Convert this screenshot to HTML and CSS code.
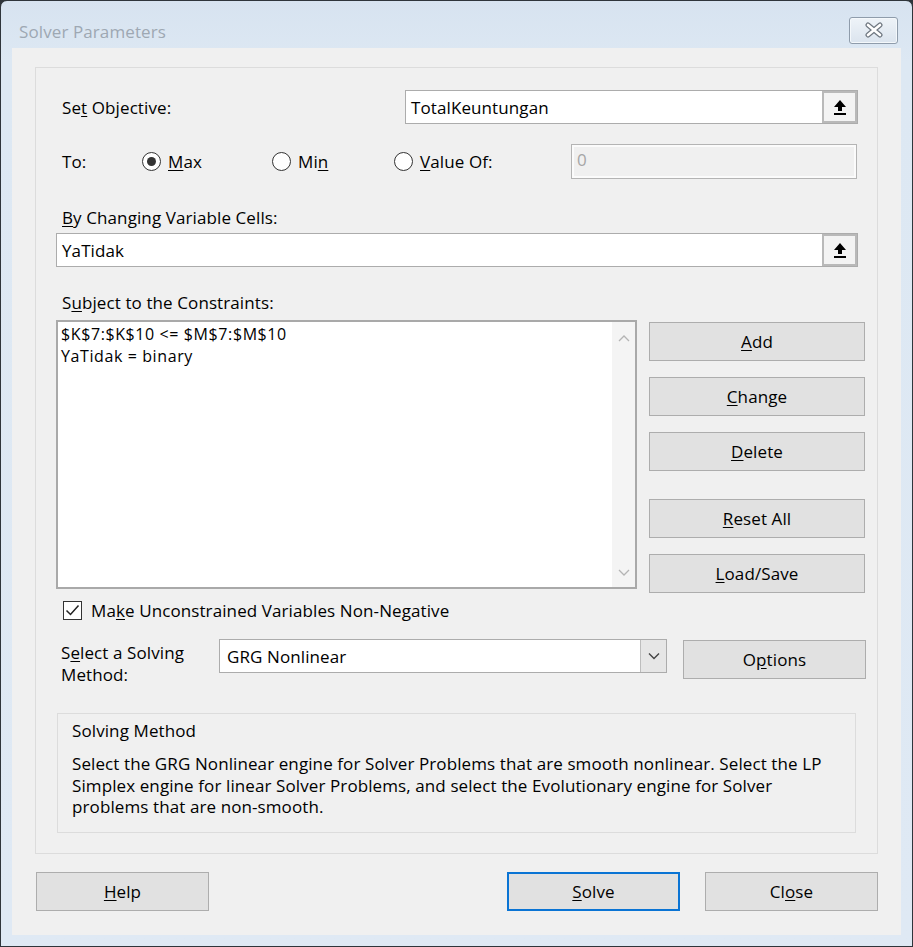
FILE: index.html
```html
<!DOCTYPE html>
<html lang="en">
<head>
  <meta charset="UTF-8">
  <title>Solver Parameters</title>
  <link rel="stylesheet" href="styles.css">
</head>
<body>

  <div class="window">

    <!-- Title bar -->
    <div class="titlebar">
      <span class="title">Solver Parameters</span>
      <button class="close-x" aria-label="Close">
        <svg width="20" height="16" viewBox="0 0 20 16">
          <path d="M4 3 L16 13 M16 3 L4 13" stroke="#6f7780" stroke-width="5" stroke-linecap="round"/>
          <path d="M4 3 L16 13 M16 3 L4 13" stroke="#ffffff" stroke-width="2.6" stroke-linecap="round"/>
        </svg>
      </button>
    </div>

    <div class="client">
      <div class="panel">

        <!-- Set Objective -->
        <div class="row objective-row">
          <span class="label">Se<u>t</u> Objective:</span>
          <div class="refedit objective">
            <span class="refedit-text">TotalKeuntungan</span>
            <span class="collapse-btn">
              <svg width="14" height="16" viewBox="0 0 14 16">
                <path d="M7 1 L13 8 L9 8 L9 12 L5 12 L5 8 L1 8 Z" fill="#000"/>
                <rect x="1" y="14" width="12" height="2" fill="#000"/>
              </svg>
            </span>
          </div>
        </div>

        <!-- To: -->
        <div class="row to-row">
          <span class="label to-label">To:</span>
          <label class="radio radio-max"><span class="dot checked"></span><span><u>M</u>ax</span></label>
          <label class="radio radio-min"><span class="dot"></span><span>Mi<u>n</u></span></label>
          <label class="radio radio-value"><span class="dot"></span><span><u>V</u>alue Of:</span></label>
          <div class="value-box">0</div>
        </div>

        <!-- By Changing Variable Cells -->
        <div class="label block-label changing-label"><u>B</u>y Changing Variable Cells:</div>
        <div class="refedit changing">
          <span class="refedit-text">YaTidak</span>
          <span class="collapse-btn">
            <svg width="14" height="16" viewBox="0 0 14 16">
              <path d="M7 1 L13 8 L9 8 L9 12 L5 12 L5 8 L1 8 Z" fill="#000"/>
              <rect x="1" y="14" width="12" height="2" fill="#000"/>
            </svg>
          </span>
        </div>

        <!-- Constraints -->
        <div class="label block-label constraints-label">S<u>u</u>bject to the Constraints:</div>
        <div class="constraints-row">
          <div class="listbox">
            <div class="list-items">
              <div class="list-item">$K$7:$K$10 &lt;= $M$7:$M$10</div>
              <div class="list-item">YaTidak = binary</div>
            </div>
            <div class="scrollbar">
              <svg width="12" height="8" viewBox="0 0 12 8"><path d="M1 7 L6 2 L11 7" fill="none" stroke="#b4b4b4" stroke-width="1.3"/></svg>
              <svg width="12" height="8" viewBox="0 0 12 8"><path d="M1 1 L6 6 L11 1" fill="none" stroke="#b4b4b4" stroke-width="1.3"/></svg>
            </div>
          </div>
          <div class="side-buttons">
            <button class="btn side-btn"><u>A</u>dd</button>
            <button class="btn side-btn"><u>C</u>hange</button>
            <button class="btn side-btn"><u>D</u>elete</button>
            <button class="btn side-btn reset-btn"><u>R</u>eset All</button>
            <button class="btn side-btn"><u>L</u>oad/Save</button>
          </div>
        </div>

        <!-- Non-negative checkbox -->
        <div class="row check-row">
          <span class="checkbox">
            <svg width="15" height="13" viewBox="0 0 15 13"><path d="M1.5 6.5 L5.5 10.5 L13.5 1.5" fill="none" stroke="#222" stroke-width="1.5"/></svg>
          </span>
          <span class="check-label">Ma<u>k</u>e Unconstrained Variables Non-Negative</span>
        </div>

        <!-- Solving method -->
        <div class="row method-row">
          <span class="label method-label">S<u>e</u>lect a Solving<br>Method:</span>
          <div class="dropdown">
            <span class="dropdown-text">GRG Nonlinear</span>
            <span class="dropdown-arrow">
              <svg width="12" height="8" viewBox="0 0 12 8"><path d="M1 1.5 L6 6.5 L11 1.5" fill="none" stroke="#444" stroke-width="1.4"/></svg>
            </span>
          </div>
          <button class="btn options-btn">O<u>p</u>tions</button>
        </div>

        <div class="method-box">
          <div class="method-title">Solving Method</div>
          <p class="method-text">Select the GRG Nonlinear engine for Solver Problems that are smooth nonlinear. Select the LP Simplex engine for linear Solver Problems, and select the Evolutionary engine for Solver problems that are non-smooth.</p>
        </div>

      </div>

      <!-- Footer buttons -->
      <div class="footer">
        <button class="btn footer-btn"><u>H</u>elp</button>
        <button class="btn footer-btn solve-btn"><u>S</u>olve</button>
        <button class="btn footer-btn">Cl<u>o</u>se</button>
      </div>
    </div>

  </div>

</body>
</html>
```

FILE: styles.css
```css
/* Basic Styles */
* {
  margin: 0;
  padding: 0;
  box-sizing: border-box;
  font-family: 'Open Sans', 'Noto Sans', sans-serif;
}

body {
  width: 913px;
  height: 947px;
  background-color: #2f353b;
  color: #000;
  font-size: 17px;
  letter-spacing: 0.1px;
  overflow: hidden;
}

u {
  text-decoration: underline;
  text-underline-offset: 2px;
}

/* Window frame */
.window {
  width: 913px;
  height: 947px;
  border: 1px solid #2f353b;
  border-radius: 7px 7px 0 0;
  background: linear-gradient(#d7e3f0, #dde8f3 60px, #dfe9f4);
  padding: 0 11px 11px 11px;
  display: flex;
  flex-direction: column;
}

.titlebar {
  height: 47px;
  display: flex;
  align-items: center;
  justify-content: space-between;
  padding: 14px 3px 0 7px;
}

.title {
  color: #9ea8b3;
  font-size: 17px;
  margin-top: -1px;
}

.close-x {
  width: 49px;
  height: 27px;
  border: 1px solid #8f9cab;
  border-radius: 3px;
  background: linear-gradient(#eef3f8, #dbe4ee);
  display: flex;
  align-items: center;
  justify-content: center;
  margin-top: -3px;
  box-shadow: inset 0 0 0 1px #f4f8fb;
}

.client {
  flex: 1;
  background-color: #f0f0f0;
  padding: 19px 23px 0 23px;
}

/* Main panel */
.panel {
  border: 1px solid #dcdcdc;
  padding: 22px 11px 20px 20px;
}

.row {
  display: flex;
  align-items: center;
}

.label {
  line-height: 21px;
}

.objective-row {
  height: 34px;
}

.objective-row .label {
  padding-left: 6px;
}

/* Reference edit boxes */
.refedit {
  height: 34px;
  background-color: #fff;
  border: 1px solid #acacac;
  display: flex;
  align-items: center;
  margin-right: 8px;
}

.objective {
  width: 453px;
  margin-left: auto;
}

.refedit-text {
  flex: 1;
  padding-left: 5px;
}

.collapse-btn {
  width: 35px;
  height: 32px;
  border: 2px solid #b9b9b9;
  background-color: #f3f3f3;
  display: flex;
  align-items: center;
  justify-content: center;
}

/* To: radios */
.to-row {
  margin-top: 20px;
  height: 35px;
}

.to-label {
  padding-left: 6px;
  width: 86px;
}

.radio {
  display: flex;
  align-items: center;
  gap: 7px;
}

.radio-max {
  width: 130px;
}

.radio-min {
  width: 122px;
}

.dot {
  width: 19px;
  height: 19px;
  border: 1px solid #333;
  border-radius: 50%;
  background-color: #fff;
  display: flex;
  align-items: center;
  justify-content: center;
}

.dot.checked::after {
  content: "";
  width: 9px;
  height: 9px;
  border-radius: 50%;
  background-color: #333;
}

.value-box {
  width: 286px;
  height: 35px;
  margin-left: auto;
  margin-right: 9px;
  border: 1px solid #b4b4b4;
  background-color: #f0f0f0;
  box-shadow: inset 0 0 0 2px #fbfbfb;
  color: #a6a6a6;
  padding: 4px 0 0 5px;
  line-height: 21px;
}

/* Block labels */
.block-label {
  padding-left: 6px;
}

.changing-label {
  margin-top: 28px;
}

.changing {
  margin-top: 5px;
}

.constraints-label {
  margin-top: 25px;
}

/* Constraints list */
.constraints-row {
  display: flex;
  margin-top: 7px;
  align-items: flex-start;
}

.listbox {
  width: 581px;
  height: 269px;
  border: 2px solid #a9a9a9;
  background-color: #fff;
  display: flex;
}

.list-items {
  flex: 1;
  padding: 1px 0 0 3px;
}

.list-item {
  font-size: 16px;
  letter-spacing: 0.6px;
  line-height: 22px;
}

.scrollbar {
  width: 23px;
  background-color: #f4f4f4;
  display: flex;
  flex-direction: column;
  justify-content: space-between;
  align-items: center;
  padding: 12px 0 10px 0;
}

.side-buttons {
  width: 216px;
  margin-left: 12px;
  margin-top: 2px;
  display: flex;
  flex-direction: column;
  gap: 16px;
}

.btn {
  height: 39px;
  background-color: #e1e1e1;
  border: 1px solid #adadad;
  font-size: 17px;
  letter-spacing: 0.1px;
  color: #000;
}

.reset-btn {
  margin-top: 12px;
}

/* Checkbox */
.check-row {
  margin-top: 8px;
  height: 19px;
}

.checkbox {
  width: 19px;
  height: 19px;
  margin-left: 7px;
  border: 1px solid #333;
  background-color: #fff;
  display: flex;
  align-items: center;
  justify-content: center;
}

.check-label {
  margin-left: 9px;
  line-height: 21px;
}

/* Solving method select */
.method-row {
  margin-top: 19px;
  height: 47px;
  align-items: flex-start;
}

.method-label {
  padding-left: 5px;
  padding-top: 3px;
  width: 163px;
  line-height: 22px;
}

.dropdown {
  width: 448px;
  height: 34px;
  border: 1px solid #acacac;
  background-color: #fff;
  display: flex;
  align-items: center;
}

.dropdown-text {
  flex: 1;
  padding-left: 7px;
}

.dropdown-arrow {
  width: 26px;
  height: 32px;
  background-color: #e6e6e6;
  border-left: 1px solid #bdbdbd;
  display: flex;
  align-items: center;
  justify-content: center;
}

.options-btn {
  width: 183px;
  margin-left: auto;
  margin-top: 1px;
}

/* Solving method description */
.method-box {
  margin: 27px 10px 0 1px;
  border: 1px solid #dcdcdc;
  padding: 6px 14px 14px 14px;
}

.method-title {
  line-height: 21px;
}

.method-text {
  margin-top: 12px;
  line-height: 21.5px;
}

/* Footer */
.footer {
  display: flex;
  margin-top: 18px;
  padding-left: 1px;
}

.footer-btn {
  width: 173px;
}

.solve-btn {
  margin-left: auto;
  margin-right: 25px;
  border: 2px solid #0a74d4;
}
```
